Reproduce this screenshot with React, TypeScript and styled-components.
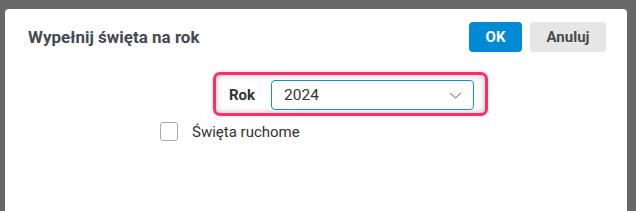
import * as React from 'react';
import styled, { createGlobalStyle } from 'styled-components';

const GlobalStyle = createGlobalStyle`
	html, body, #root {
		margin: 0;
		height: 100%;
	}
	body {
		background: #676767;
		font-family: Roboto, 'Liberation Sans', sans-serif;
		overflow: hidden;
	}
`;

const Dialog = styled.div`
	margin: 9px 9px 0 5px;
	height: calc(100% - 9px);
	background: #fff;
	border-radius: 4px 4px 0 0;
	display: flex;
	flex-direction: column;
`;

const Header = styled.div`
	display: flex;
	align-items: center;
	justify-content: space-between;
	padding: 13px 21px 0 23px;
`;

const Title = styled.h2`
	margin: 0;
	font-size: 17px;
	font-weight: 700;
	color: #444a52;
`;

const Actions = styled.div`
	display: flex;
	gap: 8px;
`;

const Button = styled.button<{ $primary?: boolean }>`
	height: 30px;
	padding: 0;
	width: ${p => (p.$primary ? '53px' : '76px')};
	border: none;
	border-radius: 4px;
	font-family: inherit;
	font-size: 15px;
	font-weight: 700;
	background: ${p => (p.$primary ? '#038ad4' : '#e6e6e6')};
	color: ${p => (p.$primary ? '#fff' : '#4a4a4a')};
	cursor: pointer;
`;

const Body = styled.div`
	padding: 20px 0 0 155px;
	display: flex;
	flex-direction: column;
	align-items: flex-start;
`;

const Highlight = styled.div`
	margin-left: 53px;
	display: flex;
	align-items: center;
	gap: 16px;
	padding: 5px 11px 3px 13px;
	border: 3px solid #ff2b6a;
	border-radius: 7px;
	box-shadow: inset 0 0 6px rgba(0, 0, 0, 0.28), 0 0 4px rgba(0, 0, 0, 0.15);
`;

const FieldLabel = styled.span`
	font-size: 15px;
	font-weight: 700;
	color: #333;
`;

const Select = styled.div`
	box-sizing: border-box;
	width: 203px;
	height: 30px;
	display: flex;
	align-items: center;
	justify-content: space-between;
	padding: 0 11px 0 12px;
	border: 1px solid #1b8ccd;
	border-radius: 4px;
	background: #fff;
	font-size: 15.5px;
	color: #333;
`;

const CheckRow = styled.label`
	display: flex;
	align-items: center;
	gap: 14px;
	margin-top: 6px;
	font-size: 15px;
	color: #333;
`;

const Box = styled.span`
	box-sizing: border-box;
	width: 18px;
	height: 19px;
	border: 1px solid #aaa;
	border-radius: 3px;
	background: #fff;
`;

export default function App() {
	return (
		<>
			<GlobalStyle />
			<Dialog>
				<Header>
					<Title>Wypełnij święta na rok</Title>
					<Actions>
						<Button $primary>OK</Button>
						<Button>Anuluj</Button>
					</Actions>
				</Header>
				<Body>
					<Highlight>
						<FieldLabel>Rok</FieldLabel>
						<Select>
							<span>2024</span>
							<svg width="13" height="7" viewBox="0 0 13 7">
								<path d="M1 1 L6.5 6 L12 1" fill="none" stroke="#9a9a9a" strokeWidth="1.1" />
							</svg>
						</Select>
					</Highlight>
					<CheckRow>
						<Box />
						Święta ruchome
					</CheckRow>
				</Body>
			</Dialog>
		</>
	);
}
